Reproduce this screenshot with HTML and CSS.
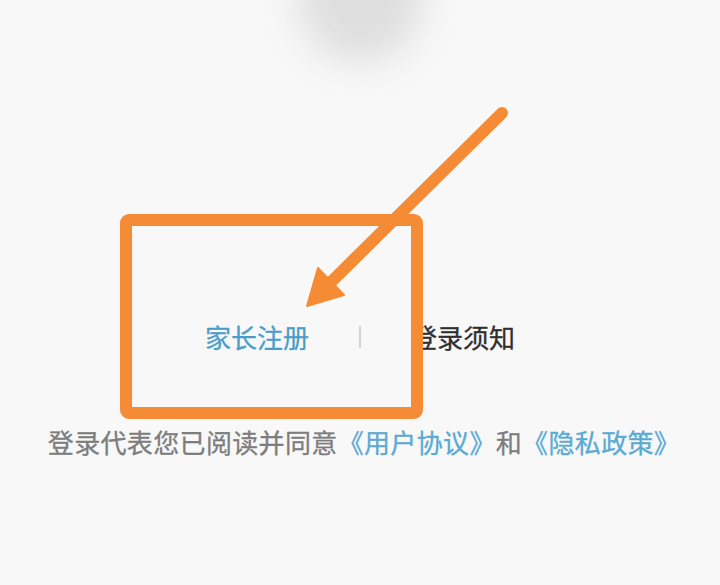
FILE: index.html
```html
<!DOCTYPE html>
<html lang="zh-CN">
<head>
<meta charset="utf-8">
<title>登录</title>
<link rel="stylesheet" href="styles.css">
</head>
<body>
<div class="page">
  <div class="blob"></div>
  <div class="links">
    <span class="link-register">家长注册</span>
    <span class="sep"></span>
    <span class="link-notice">登录须知</span>
  </div>
  <p class="agree">登录代表您已阅读并同意<span class="agree-link">《用户协议》</span>和<span class="agree-link">《隐私政策》</span></p>
  <svg class="annot" width="720" height="585" viewBox="0 0 720 585" xmlns="http://www.w3.org/2000/svg">
    <rect x="126" y="220" width="291" height="193" rx="3" fill="none" stroke="#f68b36" stroke-width="12"/>
    <line x1="502" y1="113" x2="322" y2="291" stroke="#f68b36" stroke-width="12" stroke-linecap="round"/>
    <polygon points="307,306 318,268 344,295" fill="#f68b36" stroke="#f68b36" stroke-width="2" stroke-linejoin="round"/>
  </svg>
</div>
</body>
</html>
```

FILE: styles.css
```css
html, body {
  margin: 0;
  padding: 0;
  background: #f8f8f8;
}

.page {
  position: relative;
  width: 720px;
  height: 585px;
  overflow: hidden;
  display: flex;
  flex-direction: column;
  align-items: center;
  font-family: "Noto Sans CJK SC", "Noto Sans", sans-serif;
}

.blob {
  width: 125px;
  height: 130px;
  margin-top: -68px;
  border-radius: 50%;
  background: #dedede;
  filter: blur(18px);
  flex: none;
}

.links {
  margin-top: 257px;
  display: flex;
  align-items: center;
  gap: 50px;
  font-size: 26px;
  line-height: 36px;
  -webkit-text-stroke: 0.3px currentColor;
}

.link-register {
  color: #4b9dc8;
}

.link-notice {
  color: #2f2f2f;
}

.sep {
  width: 2px;
  height: 22px;
  background: #d4d4d4;
}

.agree {
  margin: 69px 0 0;
  font-size: 26px;
  line-height: 36px;
  color: #7d7d7d;
  letter-spacing: 0.35px;
  transform: translateX(4px);
  -webkit-text-stroke: 0.3px currentColor;
}

.agree-link {
  color: #5aaad3;
}

.annot {
  position: absolute;
  left: 0;
  top: 0;
  pointer-events: none;
}
```
